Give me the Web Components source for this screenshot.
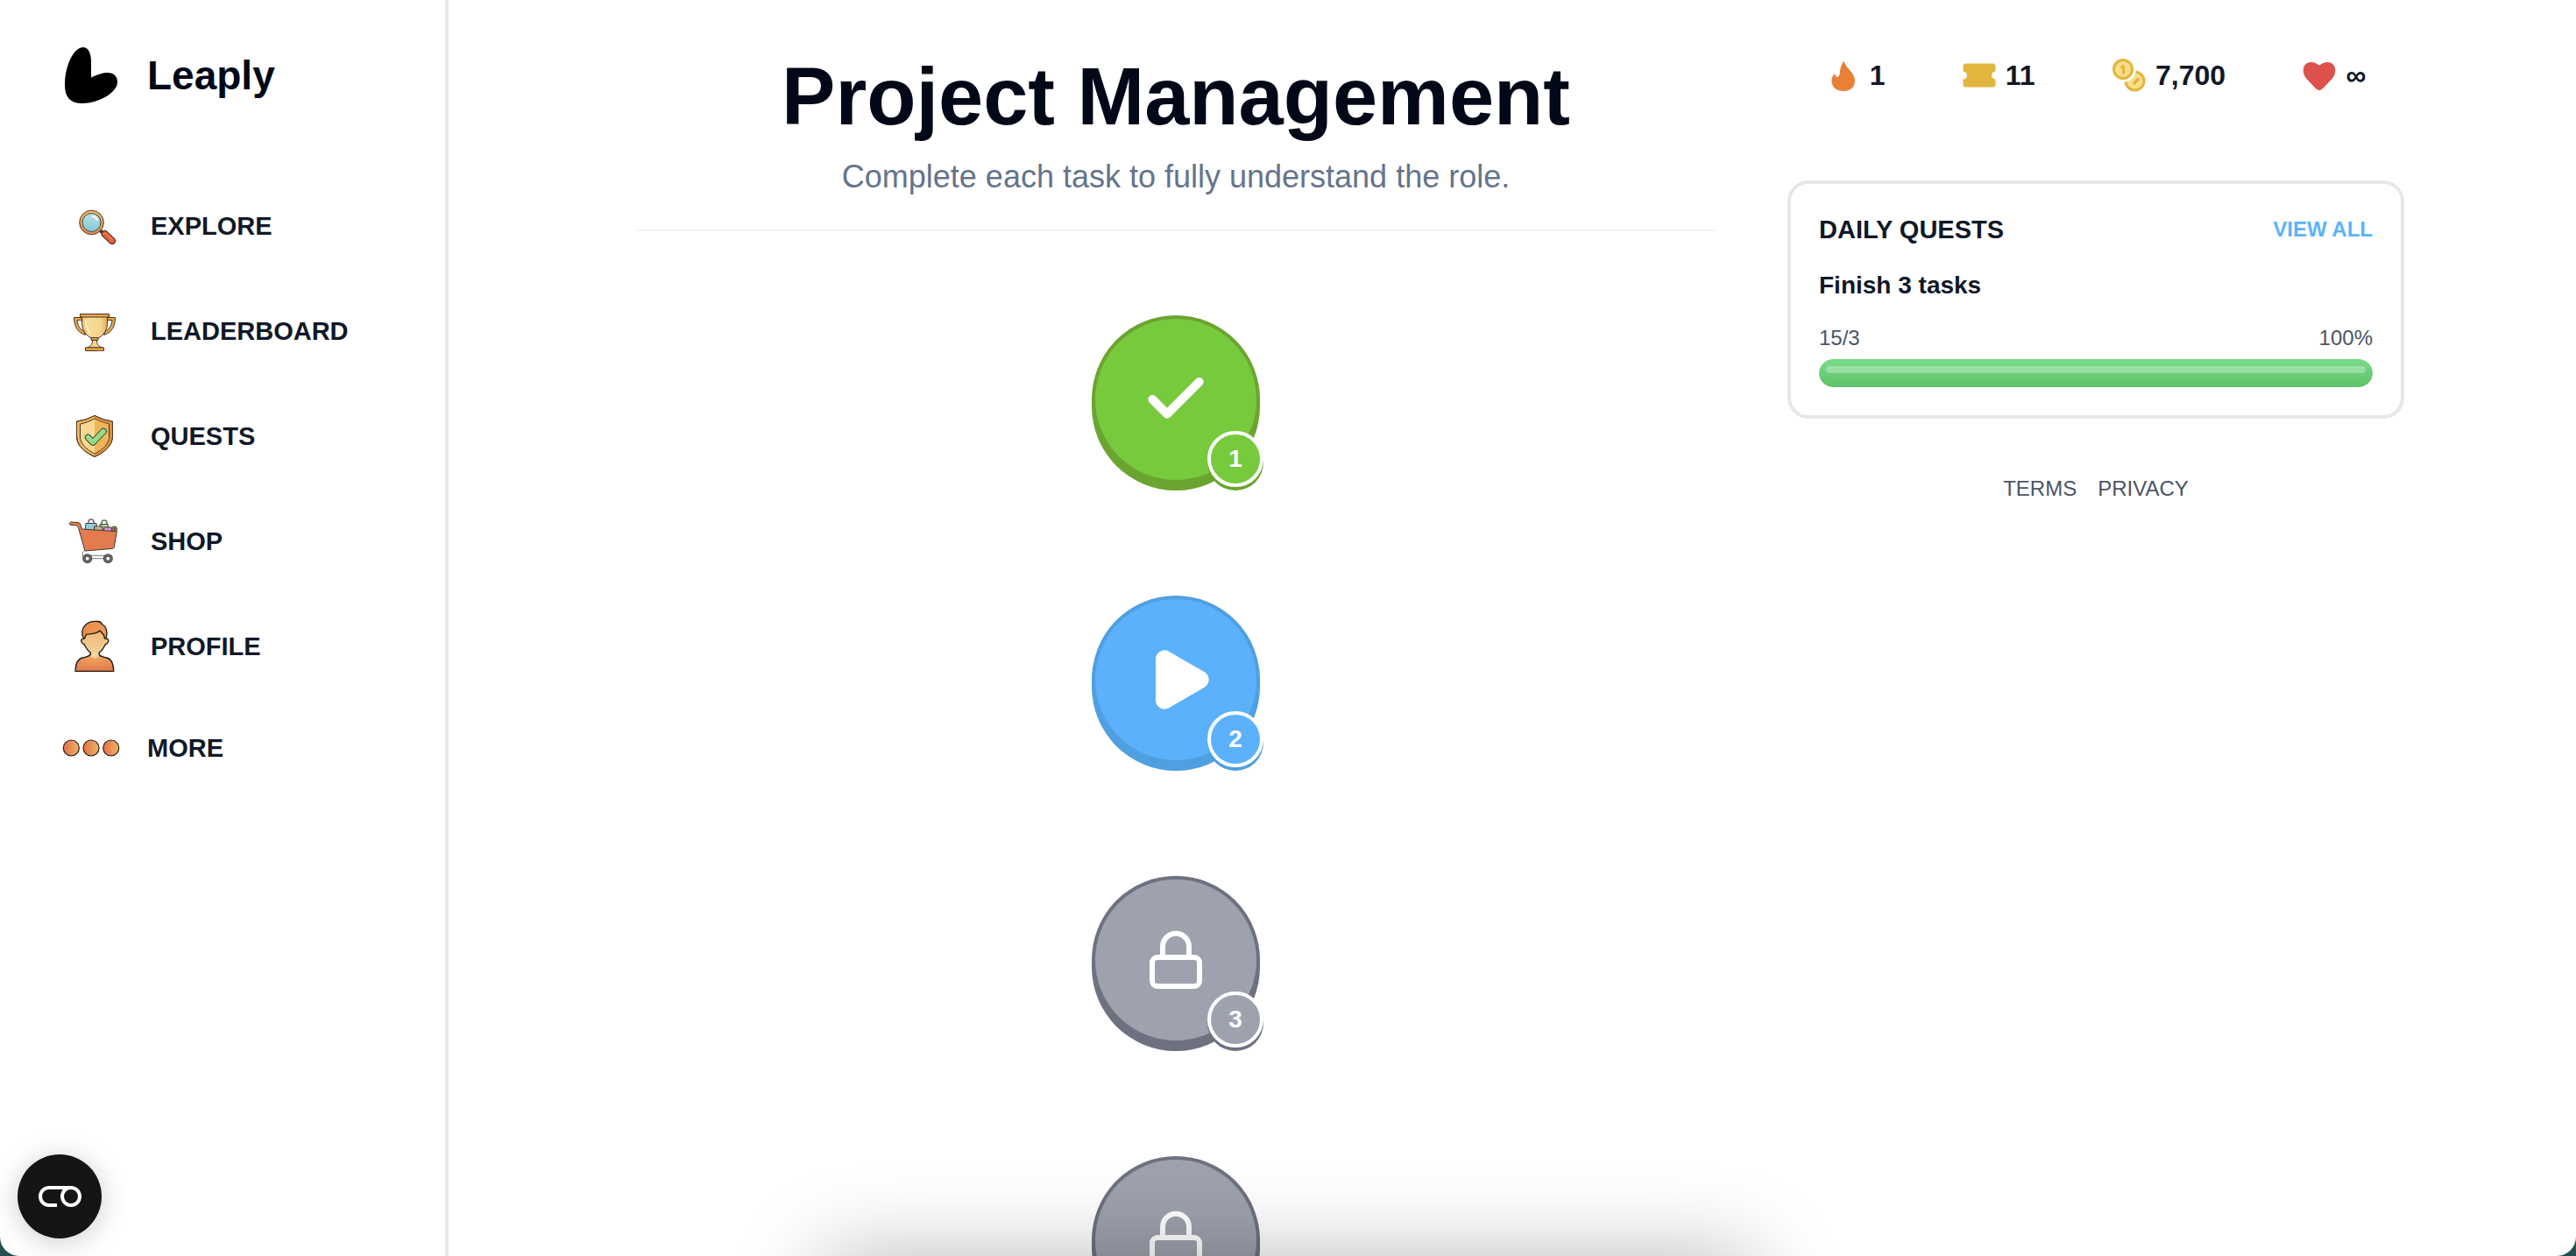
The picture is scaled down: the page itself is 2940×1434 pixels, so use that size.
<!DOCTYPE html>
<html lang="en">
<head>
  <meta charset="utf-8">
  <meta name="viewport" content="width=device-width, initial-scale=1">
  <title>Leaply</title>
  <style>
    html {
      background: #24504f;
    }

    body {
      margin: 0;
      font-family: "Liberation Sans", Arial, sans-serif;
      color: #111827;
    }
  </style>
</head>
<body>
  <app-shell>
    <side-bar slot="sidebar">
      <nav-item href="#explore" label="EXPLORE">
        <svg viewBox="0 0 64 64" width="64" height="64" aria-hidden="true">
          <defs>
            <linearGradient id="glass" x1="0" y1="0" x2="0" y2="1"><stop offset="0" stop-color="#b5e3e4"/><stop offset="1" stop-color="#86c5d8"/></linearGradient>
            <linearGradient id="ring" x1="0" y1="0" x2="0" y2="1"><stop offset="0" stop-color="#f3bd62"/><stop offset="1" stop-color="#e58a42"/></linearGradient>
          </defs>
          <path d="M38 37l5 4" stroke="#333b40" stroke-width="4"/>
          <path d="M43.500 41l8.500 8" stroke="#3a2620" stroke-width="8" stroke-linecap="round"/>
          <path d="M43.500 41l8.500 8" stroke="#e3603a" stroke-width="6" stroke-linecap="round"/>
          <path d="M44 40l8 7" stroke="#f08a5c" stroke-width="1.5" stroke-linecap="round"/>
          <circle cx="28.500" cy="28" r="13.800" fill="url(#ring)" stroke="#4a3b2c"/>
          <circle cx="28.500" cy="28" r="10.500" fill="url(#glass)" stroke="#3c4a4c"/>
          <path d="M29.500 21q4 .5 5.500 4" fill="none" stroke="#fff" stroke-width="2" stroke-linecap="round"/>
        </svg>
      </nav-item>
      <nav-item href="#leaderboard" label="LEADERBOARD">
        <svg viewBox="0 0 64 64" width="64" height="64" aria-hidden="true">
          <defs>
            <linearGradient id="cup" x1="0" x2="1"><stop offset="0" stop-color="#eeb965"/><stop offset=".25" stop-color="#f8dc9a"/><stop offset=".75" stop-color="#f5d48b"/><stop offset="1" stop-color="#e6a94f"/></linearGradient>
          </defs>
          <g fill="#eaa64c" stroke="#463728" stroke-linejoin="round">
            <path d="M18 16.500H8.500C8.500 27 13 34 21.500 36.500L20 32.500C15.500 30 12.500 26 12 19.500H18z"/>
            <path d="M46 16.500h9.500C55.500 27 51 34 42.500 36.500l1.500-4c4.500-2.500 7.500-6.500 8-13H46z"/>
            <path d="M17.500 15.500h29v8c0 7.500-5 14-10.500 16.500h-8C22.500 37 17.500 31 17.500 23.500z" fill="url(#cup)"/>
            <path d="M15.500 12.500h33v3.500h-33z"/>
            <path d="M29.500 42.500h5c0 4.500 1.500 6.500 6 8.500h-17c4.500-2 6-4 6-8.500z" fill="#f5d48b"/>
            <path d="M28 39.500h8v2.800h-8zM21.500 50.800h21v3.700h-21z"/>
          </g>
          <path d="M21.500 20c0 6 1.500 9 4.500 13" fill="none" stroke="#fdf2cf" stroke-width="1.800" stroke-linecap="round"/>
          <path d="M36 54h6" stroke="#dd6f32"/>
        </svg>
      </nav-item>
      <nav-item href="#quests" label="QUESTS">
        <svg viewBox="0 0 64 64" width="64" height="64" aria-hidden="true">
          <g stroke="#4a3826" stroke-linejoin="round">
            <path d="M32 8.500Q22 14 11.500 15.200V32c0 11 9.500 18.500 20.500 23.500C43 50.500 52.500 43 52.500 32V15.200Q42 14 32 8.500z" fill="#f0b858"/>
            <path d="M32 8.500Q42 14 52.500 15.200V32c0 11-9.500 18.500-20.500 23.500l0-4z" fill="#df8f3c" stroke="none"/>
            <path d="M32 8.500Q22 14 11.500 15.200V32c0 11 9.500 18.500 20.500 23.500C43 50.500 52.500 43 52.500 32V15.200Q42 14 32 8.500z" fill="none"/>
            <path d="M32 12Q24 16.500 15.500 18.200V32c0 9 7.500 15.500 16.500 20C41 47.500 48.500 41 48.500 32V18.200Q40 16.500 32 12z" fill="#f8d793"/>
            <path d="M32 12.500q8 4 16 6V32c0 9-7.500 15-16 19.500z" fill="#f0b45a" stroke="none"/>
          </g>
          <path d="M24.500 33.500l5.500 5.500L42 26.500" fill="none" stroke="#2f4a2d" stroke-width="7.500" stroke-linecap="round" stroke-linejoin="round"/>
          <path d="M24.500 33.500l5.500 5.500L42 26.500" fill="none" stroke="#98db86" stroke-width="5.500" stroke-linecap="round" stroke-linejoin="round"/>
        </svg>
      </nav-item>
      <nav-item href="#shop" label="SHOP">
        <svg viewBox="0 0 64 64" width="64" height="64" aria-hidden="true">
          <g stroke="#3f3a3a" stroke-linejoin="round">
            <path d="M25 12v-2a3 3 0 0 1 6 0v2" fill="none" stroke="#8a5878" stroke-width="1.500"/>
            <path d="M40 13v-2a3 3 0 0 1 6 0v2" fill="none" stroke="#5d7c4f" stroke-width="1.500"/>
            <path d="M22 11.500h12l1 9H21z" fill="#8fd0dc"/>
            <path d="M38 12.500h9l1 8h-10z" fill="#a8d99b"/>
            <path d="M31.500 15h9.500v6h-9.500z" fill="#e9a45a"/>
            <path d="M36 15v6" stroke="#7ec9d6" stroke-width="2"/>
            <path d="M43 16h8l1 5H42z" fill="#dc94cf"/>
            <circle cx="54.500" cy="18" r="3" fill="#b98a3a"/>
            <path d="M54.500 16.500v3M53 18h3" stroke-width=".8"/>
            <path d="M4.500 10l8.500 .5q3 .5 3.500 4l1 3.500 39.800 2.700-3 18q-.3 1.500-2 1.700L21 43 14 18.500q-.8-4.500-3-4.700L4.500 13.500q-2.500-1.500 0-3.500z" fill="#e37b4e"/>
            <path d="M20.500 43q-4 1.500-1.500 7M22 48.300h26M24 51.700h24" fill="none" stroke="#777"/>
          </g>
          <g fill="#fff" stroke="#4a4a4a" stroke-width="3.500">
            <circle cx="23.700" cy="51.700" r="3.800"/><circle cx="47.300" cy="51.700" r="3.800"/>
          </g>
          <g fill="none" stroke="#8b8b8b" stroke-width=".8">
            <circle cx="23.700" cy="51.700" r="3.800"/><circle cx="47.300" cy="51.700" r="3.800"/>
          </g>
        </svg>
      </nav-item>
      <nav-item href="#profile" label="PROFILE">
        <svg viewBox="0 0 64 64" width="64" height="64" aria-hidden="true">
          <defs>
            <linearGradient id="face" x1="0" y1="0" x2="0" y2="1"><stop offset="0" stop-color="#efb978"/><stop offset="1" stop-color="#f4d7a0"/></linearGradient>
            <radialGradient id="shirt" cx=".5" cy="0" r=".9"><stop offset="0" stop-color="#f0b064"/><stop offset="1" stop-color="#e57f50"/></radialGradient>
            <linearGradient id="hair" x1="0" y1="0" x2="1" y2="1"><stop offset="0" stop-color="#e98a48"/><stop offset="1" stop-color="#efa25a"/></linearGradient>
          </defs>
          <g stroke="#1d1712" stroke-width="1.300" stroke-linejoin="round">
            <path d="M10 60.300C10.200 51 12.500 46.500 18 45c5-1.300 8.500-1.500 9-4h10c.5 2.500 4 2.700 9 4 5.500 1.500 7.500 6 7.700 15.300z" fill="url(#shirt)"/>
            <path d="M27.300 42V39C24 37 22 33.500 20.500 30c-4-1-5-5.500-2-7L21 15h22l3 8c3 1.500 2 6-2 7-1.500 3.500-3.500 7-6.800 9v3c-1.500 4.500-8.400 4.500-9.900 0z" fill="url(#face)" stroke="none"/>
            <path d="M27.300 42V39C24 37 22 33.500 20.500 30c-4-1-5-5.500-2-7M46 23c3 1.500 2 6-2 7-1.500 3.500-3.500 7-6.800 9v3" fill="none"/>
            <path d="M19.500 23.500C16.500 18 17.500 11 21.500 7.500 25 4 31 3 36 3.500q3.500 .3 4.500 3.500C46 9 47 17 45 23.500L43.500 23 42.500 19 38 14c-4 4-9 3.500-15.500 4.300L20.500 23z" fill="url(#hair)"/>
          </g>
        </svg>
      </nav-item>
      <nav-item label="MORE">
        <svg viewBox="0 0 64 64" width="64" height="64" overflow="visible" aria-hidden="true">
          <defs>
            <linearGradient id="dot"><stop offset="0" stop-color="#e56f47"/><stop offset="1" stop-color="#eeb466"/></linearGradient>
          </defs>
          <g fill="url(#dot)" stroke="#2a1c16" stroke-width="1.200">
            <circle cx="9.300" cy="32" r="9"/><circle cx="32" cy="32" r="9"/><circle cx="54.700" cy="32" r="9"/>
          </g>
        </svg>
      </nav-item>
    </side-bar>

    <task-path heading="Project Management" subtitle="Complete each task to fully understand the role.">
      <task-node number="1" state="done"></task-node>
      <task-node number="2" state="current"></task-node>
      <task-node number="3" state="locked"></task-node>
      <task-node state="locked"></task-node>
    </task-path>

    <side-panel slot="panel">
      <stat-item slot="stats" value="1">
        <svg viewBox="0 0 40 40" width="40" height="40" aria-hidden="true">
          <path d="M20.500 3.500C22 12 33 16 33 26.500 33 33.500 27.500 38 20 38S6.500 33.500 6.500 26.500C6.500 22.500 8 19.500 10 18c.5 2.500 1.500 4 3 4 5-1.500 .5-9 7.500-18.500z" fill="#ea7f36"/>
        </svg>
      </stat-item>
      <stat-item slot="stats" value="11">
        <svg viewBox="0 0 40 40" width="40" height="40" aria-hidden="true">
          <path d="M4.500 6.500h31q3 0 3 3v6a4.500 4.500 0 0 0 0 9v6q0 3-3 3h-31q-3 0-3-3v-6a4.500 4.500 0 0 0 0-9v-6q0-3 3-3z" fill="#e2b53e"/>
        </svg>
      </stat-item>
      <stat-item slot="stats" value="7,700">
        <svg viewBox="0 0 40 40" width="40" height="40" aria-hidden="true">
          <circle cx="26.500" cy="26.500" r="10.500" fill="#f9de8a" stroke="#e2b53e" stroke-width="3"/>
          <circle cx="13" cy="13" r="15" fill="#fff"/>
          <path d="M26 29l4-4.500" stroke="#e2b53e" stroke-width="3.500" stroke-linecap="round"/>
          <circle cx="13" cy="13" r="10.500" fill="#f9de8a" stroke="#e2b53e" stroke-width="3"/>
          <path d="M11.500 10.500l2-1v8" fill="none" stroke="#e2b53e" stroke-width="3" stroke-linecap="round" stroke-linejoin="round"/>
        </svg>
      </stat-item>
      <stat-item slot="stats" value="∞">
        <svg viewBox="0 0 40 40" width="40" height="40" aria-hidden="true">
          <path d="M20 37Q17.500 37 14 33L5 23.500C-1 16 1.500 5 10.500 5Q16 5 20 8.800 24 5 29.500 5C38.500 5 41 16 35 23.500L26 33Q22.500 37 20 37z" fill="#dd524c"/>
        </svg>
      </stat-item>
      <quest-card heading="DAILY QUESTS" quest="Finish 3 tasks" count="15/3" percent="100"></quest-card>
    </side-panel>

    <consent-button slot="overlay"></consent-button>
  </app-shell>

  <script>
    class AppShell extends HTMLElement {
      constructor() {
        super();
        this.attachShadow({ mode: 'open' });
      }

      connectedCallback() {
        this.shadowRoot.innerHTML = `
          <style>
            :host {
              display: flex;
              height: 100vh;
              overflow: hidden;
              position: relative;
              background: #fff;
              border-radius: 0 0 22px 22px;
            }

            main {
              flex: 1;
              min-width: 0;
              padding-left: 16px;
              overflow-y: auto;
              scrollbar-width: none;
            }

            .columns {
              display: flex;
              gap: 80px;
              max-width: 2020px;
              margin: 0 auto;
            }

            /* soft shade that rises from the bottom edge */
            .shade {
              position: absolute;
              top: 100%;
              left: 32%;
              right: 32%;
              height: 120px;
              box-shadow: 0 0 100px rgba(0, 0, 0, 0.28);
              pointer-events: none;
            }
          </style>

          <slot name="sidebar"></slot>
          <main>
            <div class="columns">
              <slot></slot>
              <slot name="panel"></slot>
            </div>
          </main>
          <div class="shade"></div>
          <slot name="overlay"></slot>
        `;
      }
    }

    class SideBar extends HTMLElement {
      constructor() {
        super();
        this.attachShadow({ mode: 'open' });
      }

      connectedCallback() {
        this.shadowRoot.innerHTML = `
          <style>
            :host {
              display: block;
              flex: none;
              width: 512px;
              box-sizing: border-box;
              border-right: 4px solid #e5e7eb;
            }

            .brand {
              display: flex;
              align-items: center;
              gap: 32px;
              padding: 54px 72px 88px;
              color: #020817;
              text-decoration: none;
              font-size: 46px;
              font-weight: bold;
              line-height: 64px;
            }

            svg {
              flex: none;
            }

            nav {
              display: flex;
              flex-direction: column;
              gap: 16px;
              padding: 0 32px;
            }
          </style>

          <a class="brand" href="#home">
            <svg viewBox="0 0 64 64" width="64" height="64" aria-hidden="true">
              <path d="M23 0C29 0 32 7 32 17V34.500C39 31 46 29 51 29 58 29 62 33.500 62 39.500 62 52 40 64 22 64 8 64 2 57 2 43 2 21 12 0 23 0z"/>
            </svg>
            Leaply
          </a>
          <nav><slot></slot></nav>
        `;
      }
    }

    class NavItem extends HTMLElement {
      constructor() {
        super();
        this.attachShadow({ mode: 'open' });
      }

      connectedCallback() {
        const href = this.getAttribute('href');
        const content = `<slot></slot><span>${this.getAttribute('label')}</span>`;

        this.shadowRoot.innerHTML = `
          <style>
            :host {
              display: block;
            }

            a, button {
              display: flex;
              align-items: center;
              gap: 32px;
              width: 100%;
              box-sizing: border-box;
              padding: 16px 40px;
              border: 0;
              border-radius: 24px;
              background: none;
              color: #111827;
              font: bold 29px/40px "Liberation Sans", Arial, sans-serif;
              text-align: left;
              text-decoration: none;
              cursor: pointer;
            }

            a {
              border: 4px solid transparent;
            }

            a:hover, button:hover {
              background: #f3f4f6;
            }

            ::slotted(svg) {
              flex: none;
            }
          </style>

          ${href ? `<a href="${href}">${content}</a>` : `<button type="button">${content}</button>`}
        `;
      }
    }

    class TaskPath extends HTMLElement {
      constructor() {
        super();
        this.attachShadow({ mode: 'open' });
      }

      connectedCallback() {
        this.shadowRoot.innerHTML = `
          <style>
            :host {
              display: block;
              flex: 1;
              min-width: 0;
              padding-top: 62px;
            }

            header {
              padding-bottom: 40px;
              border-bottom: 2px solid #f3f4f6;
              text-align: center;
            }

            h1 {
              margin: 0 0 24px;
              color: #020817;
              font-size: 92px;
              line-height: 96px;
            }

            p {
              margin: 0;
              color: #64748b;
              font-size: 36px;
              line-height: 40px;
            }

            .path {
              display: flex;
              flex-direction: column;
              align-items: center;
              gap: 128px;
              padding: 96px 0;
            }
          </style>

          <header>
            <h1>${this.getAttribute('heading')}</h1>
            <p>${this.getAttribute('subtitle')}</p>
          </header>
          <div class="path"><slot></slot></div>
        `;
      }
    }

    const taskIcons = {
      done: '<path d="M20 6 9 17l-5-5" stroke-width="3"/>',
      current: '<path d="M8.100 4.900v14.200L20.300 12z" fill="#fff" stroke-width="6"/>',
      locked: `
        <rect x="3.900" y="11.100" width="16.200" height="9.900" rx="1.800" stroke-width="1.800"/>
        <path d="M7.500 11V7.400a4.500 4.500 0 0 1 9 0V11" stroke-width="1.800"/>
      `
    };

    class TaskNode extends HTMLElement {
      constructor() {
        super();
        this.attachShadow({ mode: 'open' });
      }

      connectedCallback() {
        const number = this.getAttribute('number');
        const state = this.getAttribute('state');

        this.shadowRoot.innerHTML = `
          <style>
            :host {
              display: block;
              --fill: #9ea2ae;
              --edge: #6d7180;
            }

            :host([state="done"]) {
              --fill: #78ca3d;
              --edge: #6ba430;
            }

            :host([state="current"]) {
              --fill: #5bb1fb;
              --edge: #509fe0;
            }

            button {
              display: flex;
              align-items: center;
              justify-content: center;
              position: relative;
              width: 192px;
              height: 192px;
              padding: 0;
              border: 4px solid var(--edge);
              border-radius: 50%;
              background: var(--fill);
              box-shadow: 0 8px 0 var(--edge);
              cursor: pointer;
            }

            .badge {
              display: flex;
              align-items: center;
              justify-content: center;
              position: absolute;
              right: -8px;
              bottom: -8px;
              width: 56px;
              height: 56px;
              border: 4px solid #fff;
              border-radius: 50%;
              background: var(--fill);
              box-shadow: 0 4px 0 var(--edge);
              color: #fff;
              font: bold 28px/40px "Liberation Sans", Arial, sans-serif;
            }
          </style>

          <button type="button" aria-label="${number ? `Task ${number}` : 'Next task'}">
            <svg viewBox="0 0 24 24" width="80" height="80" fill="none" stroke="#fff" stroke-linecap="round" stroke-linejoin="round" aria-hidden="true">
              ${taskIcons[state]}
            </svg>
            ${number ? `<span class="badge">${number}</span>` : ''}
          </button>
        `;
      }
    }

    class SidePanel extends HTMLElement {
      constructor() {
        super();
        this.attachShadow({ mode: 'open' });
      }

      connectedCallback() {
        this.shadowRoot.innerHTML = `
          <style>
            :host {
              display: block;
              flex: none;
              width: 704px;
              padding-top: 46px;
            }

            .stats {
              display: flex;
              justify-content: space-around;
              align-items: center;
              height: 80px;
              margin-bottom: 80px;
            }

            footer {
              display: flex;
              justify-content: center;
              gap: 24px;
              margin-top: 64px;
              font-size: 24px;
              line-height: 32px;
            }

            footer a {
              color: #4b5563;
              text-decoration: none;
            }
          </style>

          <div class="stats"><slot name="stats"></slot></div>
          <slot></slot>
          <footer>
            <a href="#terms">TERMS</a>
            <a href="#privacy">PRIVACY</a>
          </footer>
        `;
      }
    }

    class StatItem extends HTMLElement {
      constructor() {
        super();
        this.attachShadow({ mode: 'open' });
      }

      connectedCallback() {
        this.shadowRoot.innerHTML = `
          <style>
            :host {
              display: flex;
              align-items: center;
              gap: 10px;
              font-size: 32px;
              font-weight: bold;
              line-height: 40px;
            }
          </style>

          <slot></slot>
          <span>${this.getAttribute('value')}</span>
        `;
      }
    }

    class QuestCard extends HTMLElement {
      constructor() {
        super();
        this.attachShadow({ mode: 'open' });
      }

      connectedCallback() {
        const percent = this.getAttribute('percent');

        this.shadowRoot.innerHTML = `
          <style>
            :host {
              display: block;
              padding: 32px;
              border: 4px solid #e5e7eb;
              border-radius: 24px;
            }

            .row {
              display: flex;
              justify-content: space-between;
              align-items: center;
            }

            h2 {
              margin: 0;
              font-size: 29px;
              line-height: 40px;
            }

            h3 {
              margin: 24px 0;
              font-size: 28px;
              line-height: 40px;
            }

            a {
              color: #5bb4fb;
              font-size: 24px;
              font-weight: bold;
              line-height: 32px;
              text-decoration: none;
            }

            .progress {
              margin-bottom: 8px;
              color: #4b5563;
              font-size: 24px;
              line-height: 32px;
            }

            .bar {
              height: 32px;
              border-radius: 16px;
              background: #e5e7eb;
              overflow: hidden;
            }

            .fill {
              width: ${percent}%;
              height: 100%;
              box-sizing: border-box;
              padding: 8px;
              border-radius: 16px;
              background: linear-gradient(#78dd88, #5ec169);
            }

            .shine {
              height: 8px;
              border-radius: 4px;
              background: rgba(255, 255, 255, 0.3);
            }
          </style>

          <div class="row">
            <h2>${this.getAttribute('heading')}</h2>
            <a href="#quests">VIEW ALL</a>
          </div>
          <h3>${this.getAttribute('quest')}</h3>
          <div class="row progress">
            <span>${this.getAttribute('count')}</span>
            <span>${percent}%</span>
          </div>
          <div class="bar" role="progressbar" aria-valuenow="${percent}" aria-valuemin="0" aria-valuemax="100">
            <div class="fill"><div class="shine"></div></div>
          </div>
        `;
      }
    }

    class ConsentButton extends HTMLElement {
      constructor() {
        super();
        this.attachShadow({ mode: 'open' });
      }

      connectedCallback() {
        this.shadowRoot.innerHTML = `
          <style>
            :host {
              position: absolute;
              left: 20px;
              bottom: 20px;
            }

            button {
              display: flex;
              align-items: center;
              justify-content: center;
              width: 96px;
              height: 96px;
              padding: 0;
              border: 0;
              border-radius: 50%;
              background: #151515;
              box-shadow: 0 4px 32px rgba(0, 0, 0, 0.2);
              cursor: pointer;
            }
          </style>

          <button type="button" aria-label="Cookie settings">
            <svg viewBox="0 0 49 24" width="49" height="24" fill="none" stroke="#fff" stroke-width="4" aria-hidden="true">
              <path d="M21 22h-9a10 10 0 0 1 0-20h25"/>
              <circle cx="37" cy="12" r="10"/>
            </svg>
          </button>
        `;
      }
    }

    customElements.define('app-shell', AppShell);
    customElements.define('side-bar', SideBar);
    customElements.define('nav-item', NavItem);
    customElements.define('task-path', TaskPath);
    customElements.define('task-node', TaskNode);
    customElements.define('side-panel', SidePanel);
    customElements.define('stat-item', StatItem);
    customElements.define('quest-card', QuestCard);
    customElements.define('consent-button', ConsentButton);
  </script>
</body>
</html>
